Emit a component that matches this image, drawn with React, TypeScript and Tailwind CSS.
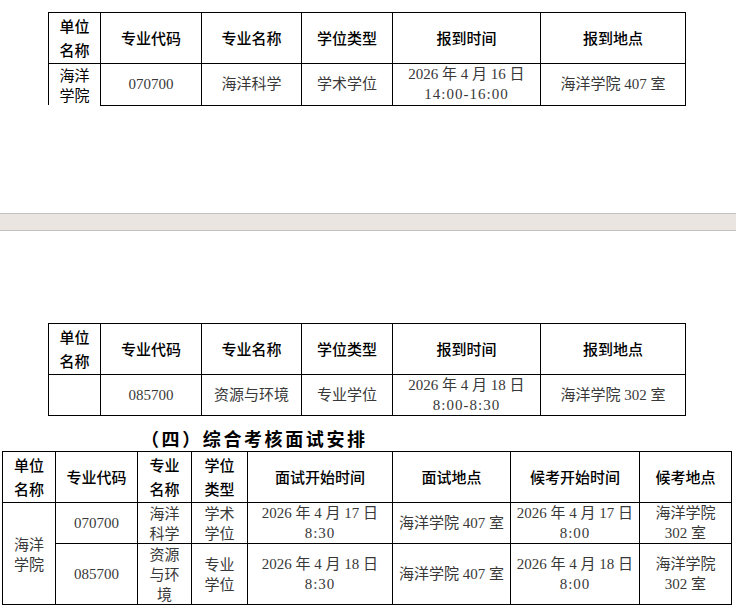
import React from "react";

const head = "border border-black p-0 text-center align-middle text-black font-medium leading-[24px]";
const cell = "border border-black p-0 text-center align-middle text-[#383838] leading-[20px]";
const hei = { fontFamily: '"Noto Sans CJK SC", "Noto Sans", sans-serif' };
const song = { fontFamily: '"Liberation Serif", "Noto Sans CJK SC", serif' };

type TReport = { code: string; name: string; kind: string; date: string; time: string; place: string };

const Time = ({ children }: { children: React.ReactNode }) => <span className="tracking-[1px]">{children}</span>;

const ReportTable = ({ row, unit, cut }: { row: TReport; unit?: boolean; cut?: boolean }) => (
  <table className="table-fixed border-collapse text-[15px]">
    <colgroup>
      <col className="w-[52px]" />
      <col className="w-[101px]" />
      <col className="w-[100px]" />
      <col className="w-[91px]" />
      <col className="w-[148px]" />
      <col className="w-[145px]" />
    </colgroup>
    <tbody>
      <tr className="h-[51px]" style={hei}>
        <td className={head}>
          单位
          <br />
          名称
        </td>
        <td className={head}>专业代码</td>
        <td className={head}>专业名称</td>
        <td className={head}>学位类型</td>
        <td className={head}>报到时间</td>
        <td className={head}>报到地点</td>
      </tr>
      <tr className="h-[41px]" style={song}>
        <td className={cut ? "border-x border-black p-0 text-center align-top text-black leading-[20px] pt-[1px]" : cell} style={hei}>
          {unit ? (
            <>
              海洋
              <br />
              学院
            </>
          ) : null}
        </td>
        <td className={cell}>{row.code}</td>
        <td className={cell}>{row.name}</td>
        <td className={cell}>{row.kind}</td>
        <td className={cell}>
          {row.date}
          <br />
          <Time>{row.time}</Time>
        </td>
        <td className={cell}>{row.place}</td>
      </tr>
    </tbody>
  </table>
);

const App = () => {
  return (
    <div className="w-[736px] h-[607px] overflow-hidden bg-white">
      {/* page 1 */}
      <div className="h-[213px] pt-[12px] pl-[48px]">
        <ReportTable
          unit
          cut
          row={{ code: "070700", name: "海洋科学", kind: "学术学位", date: "2026 年 4 月 16 日", time: "14:00-16:00", place: "海洋学院 407 室" }}
        />
      </div>

      {/* page gap */}
      <div className="h-[18px] bg-[#ebe5e2] border-y border-[#c3c1bf]" />

      {/* page 2 */}
      <div className="pt-[92px]">
        <div className="pl-[48px]">
          <ReportTable
            row={{ code: "085700", name: "资源与环境", kind: "专业学位", date: "2026 年 4 月 18 日", time: "8:00-8:30", place: "海洋学院 302 室" }}
          />
        </div>
        <div className="h-[35px] pt-[10px] pl-[141px] text-[18px] leading-[24px] font-bold tracking-[2.6px] text-black" style={hei}>
          （四）综合考核面试安排
        </div>
        <div className="pl-[2px]">
          <table className="table-fixed border-collapse text-[15px]">
            <colgroup>
              <col className="w-[53px]" />
              <col className="w-[82px]" />
              <col className="w-[54px]" />
              <col className="w-[56px]" />
              <col className="w-[145px]" />
              <col className="w-[118px]" />
              <col className="w-[129px]" />
              <col className="w-[92px]" />
            </colgroup>
            <tbody>
              <tr className="h-[51px]" style={hei}>
                <td className={head}>
                  单位
                  <br />
                  名称
                </td>
                <td className={head}>专业代码</td>
                <td className={head}>
                  专业
                  <br />
                  名称
                </td>
                <td className={head}>
                  学位
                  <br />
                  类型
                </td>
                <td className={head}>面试开始时间</td>
                <td className={head}>面试地点</td>
                <td className={head}>候考开始时间</td>
                <td className={head}>候考地点</td>
              </tr>
              <tr className="h-[40px]" style={song}>
                <td rowSpan={2} className={cell} style={hei}>
                  海洋
                  <br />
                  学院
                </td>
                <td className={cell}>070700</td>
                <td className={cell} style={hei}>
                  海洋
                  <br />
                  科学
                </td>
                <td className={cell} style={hei}>
                  学术
                  <br />
                  学位
                </td>
                <td className={cell}>
                  2026 年 4 月 17 日
                  <br />
                  <Time>8:30</Time>
                </td>
                <td className={cell}>海洋学院 407 室</td>
                <td className={cell}>
                  2026 年 4 月 17 日
                  <br />
                  <Time>8:00</Time>
                </td>
                <td className={cell}>
                  海洋学院
                  <br />
                  302 室
                </td>
              </tr>
              <tr className="h-[61px]" style={song}>
                <td className={cell}>085700</td>
                <td className={cell} style={hei}>
                  资源
                  <br />
                  与环
                  <br />
                  境
                </td>
                <td className={cell} style={hei}>
                  专业
                  <br />
                  学位
                </td>
                <td className={cell}>
                  2026 年 4 月 18 日
                  <br />
                  <Time>8:30</Time>
                </td>
                <td className={cell}>海洋学院 407 室</td>
                <td className={cell}>
                  2026 年 4 月 18 日
                  <br />
                  <Time>8:00</Time>
                </td>
                <td className={cell}>
                  海洋学院
                  <br />
                  302 室
                </td>
              </tr>
            </tbody>
          </table>
        </div>
      </div>
    </div>
  );
};

export default App;
